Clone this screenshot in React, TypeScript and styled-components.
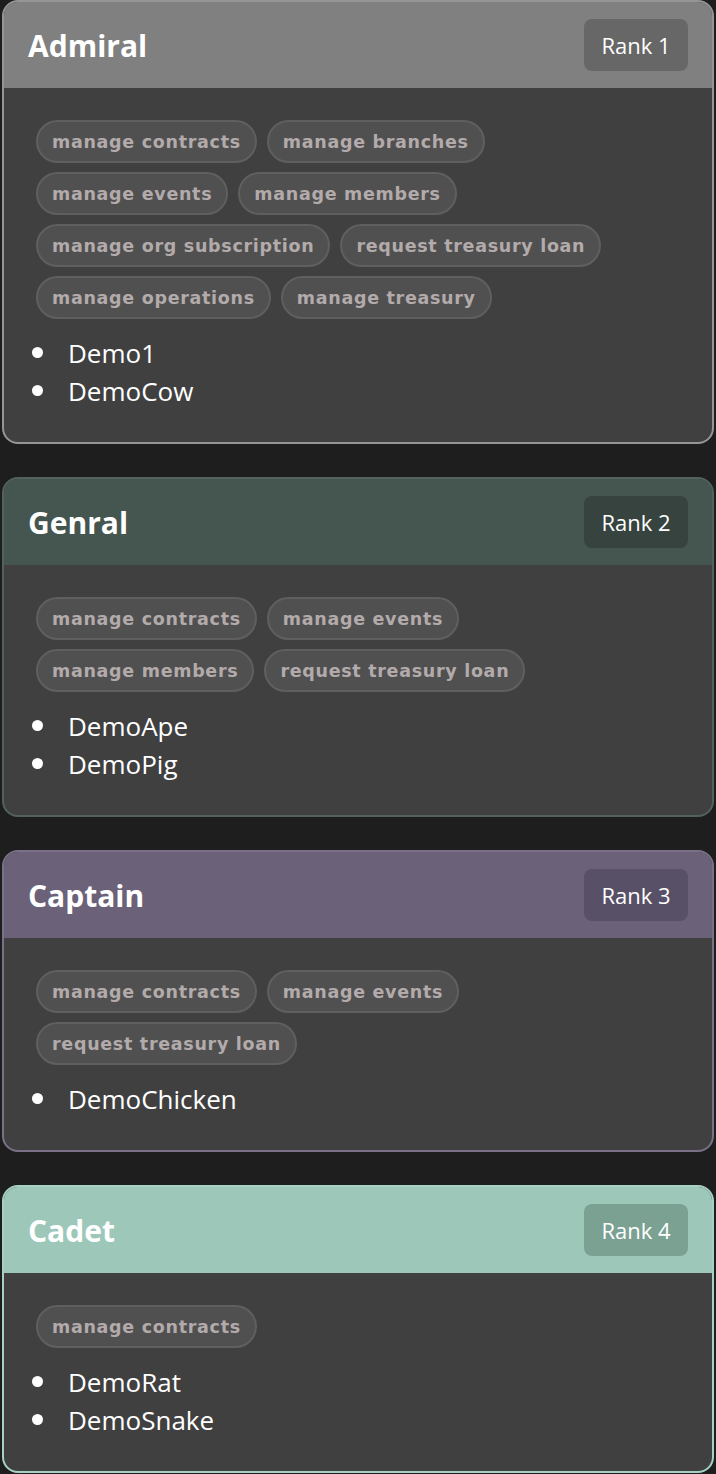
import styled, { createGlobalStyle } from "styled-components";

const GlobalStyle = createGlobalStyle`
  body {
    margin: 0;
    background: #1e1e1e;
    font-family: "Open Sans", "Noto Sans", sans-serif;
    color: #ffffff;
  }
`;

type Rank = {
  name: string;
  rank: number;
  color: string;
  badge: string;
  border: string;
  permissions: string[];
  members: string[];
};

const ranks: Rank[] = [
  {
    name: "Admiral",
    rank: 1,
    color: "#808080",
    badge: "#676767",
    border: "#959595",
    permissions: [
      "manage contracts",
      "manage branches",
      "manage events",
      "manage members",
      "manage org subscription",
      "request treasury loan",
      "manage operations",
      "manage treasury",
    ],
    members: ["Demo1", "DemoCow"],
  },
  {
    name: "Genral",
    rank: 2,
    color: "#45554f",
    badge: "#36433e",
    border: "#52625c",
    permissions: [
      "manage contracts",
      "manage events",
      "manage members",
      "request treasury loan",
    ],
    members: ["DemoApe", "DemoPig"],
  },
  {
    name: "Captain",
    rank: 3,
    color: "#6b6178",
    badge: "#585066",
    border: "#7a7088",
    permissions: ["manage contracts", "manage events", "request treasury loan"],
    members: ["DemoChicken"],
  },
  {
    name: "Cadet",
    rank: 4,
    color: "#9dc7b9",
    badge: "#7ba193",
    border: "#a6d0c2",
    permissions: ["manage contracts"],
    members: ["DemoRat", "DemoSnake"],
  },
];

const Page = styled.div`
  padding: 0 2px;
  display: flex;
  flex-direction: column;
  gap: 33px;
`;

const Card = styled.section<{ $border: string }>`
  border: 2px solid ${(p) => p.$border};
  border-radius: 16px;
  overflow: hidden;
  background: #404040;
`;

const CardHeader = styled.header<{ $bg: string }>`
  background: ${(p) => p.$bg};
  height: 86px;
  padding: 0 24px;
  display: flex;
  align-items: center;
  justify-content: space-between;
`;

const Title = styled.h2`
  margin: 0;
  font-size: 30px;
  font-weight: 700;
  color: #ffffff;
`;

const Badge = styled.span<{ $bg: string }>`
  background: ${(p) => p.$bg};
  border-radius: 8px;
  height: 52px;
  width: 104px;
  display: flex;
  align-items: center;
  justify-content: center;
  font-size: 22px;
  color: #ffffff;
`;

const CardBody = styled.div`
  padding: 32px 32px 33px;
`;

const Chips = styled.div`
  display: flex;
  flex-wrap: wrap;
  gap: 9px 10px;
`;

const Chip = styled.span`
  height: 43px;
  box-sizing: border-box;
  padding: 0 14px;
  display: inline-flex;
  align-items: center;
  border-radius: 22px;
  background: #505050;
  border: 2px solid #5f5f5f;
  font-family: "DejaVu Sans", Verdana, sans-serif;
  font-weight: 700;
  font-size: 17.5px;
  letter-spacing: 0.7px;
  color: #b3abab;
`;

const Members = styled.ul`
  margin: 14px 0 0;
  padding-left: 24px;
  list-style: disc;
`;

const Member = styled.li`
  padding-left: 8px;
  font-size: 26px;
  line-height: 38px;
  height: 38px;
  color: #ffffff;

  &::marker {
    font-size: 30px;
  }
`;

export default function App() {
  return (
    <>
      <GlobalStyle />
      <Page>
        {ranks.map((r) => (
          <Card key={r.name} $border={r.border}>
            <CardHeader $bg={r.color}>
              <Title>{r.name}</Title>
              <Badge $bg={r.badge}>Rank {r.rank}</Badge>
            </CardHeader>
            <CardBody>
              <Chips>
                {r.permissions.map((p) => (
                  <Chip key={p}>{p}</Chip>
                ))}
              </Chips>
              <Members>
                {r.members.map((m) => (
                  <Member key={m}>{m}</Member>
                ))}
              </Members>
            </CardBody>
          </Card>
        ))}
      </Page>
    </>
  );
}
